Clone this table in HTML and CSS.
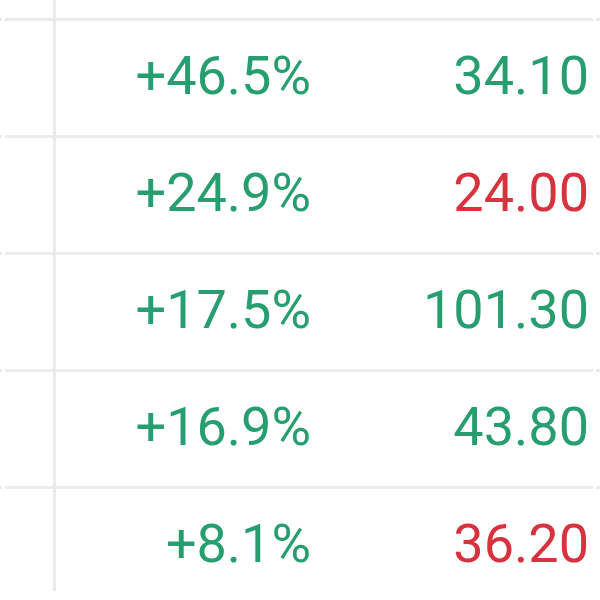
FILE: index.html
```html
<!DOCTYPE html>
<html>
<head>
<meta charset="utf-8">
<link rel="stylesheet" href="styles.css">
</head>
<body>
<div class="table">
  <div class="vline"></div>
  <div class="top"></div>
  <div class="rule"><i></i><i class="main"></i><i></i></div>
  <div class="row"><span class="pct up">+46.5%</span><span class="price up">34.10</span></div>
  <div class="rule"><i></i><i class="main"></i><i></i></div>
  <div class="row"><span class="pct up">+24.9%</span><span class="price down">24.00</span></div>
  <div class="rule"><i></i><i class="main"></i><i></i></div>
  <div class="row"><span class="pct up">+17.5%</span><span class="price up">101.30</span></div>
  <div class="rule"><i></i><i class="main"></i><i></i></div>
  <div class="row"><span class="pct up">+16.9%</span><span class="price up">43.80</span></div>
  <div class="rule"><i></i><i class="main"></i><i></i></div>
  <div class="row"><span class="pct up">+8.1%</span><span class="price down">36.20</span></div>
</div>
</body>
</html>
```
FILE: styles.css
```css
html, body {
  margin: 0;
  padding: 0;
  background: #ffffff;
}
body {
  width: 600px;
  height: 600px;
  overflow: hidden;
  font-family: Roboto, "Liberation Sans", sans-serif;
}
.table {
  position: relative;
  width: 600px;
  height: 600px;
}
.vline {
  position: absolute;
  left: 53px;
  top: 0;
  width: 3px;
  height: 591px;
  background: #ebebeb;
}
.top {
  height: 18px;
}
.rule {
  display: flex;
  gap: 3px;
  height: 3px;
}
.rule i {
  display: block;
  width: 2px;
  background: #ebebeb;
}
.rule i.main {
  flex: 1;
}
.rule i:last-child {
  width: 4px;
}
.row {
  display: flex;
  align-items: center;
  height: 114px;
  padding-left: 56px;
  padding-bottom: 5px;
  box-sizing: border-box;
  font-size: 54px;
  line-height: 1;
}
.pct {
  width: 255px;
  text-align: right;
}
.price {
  width: 278px;
  text-align: right;
}
.up { color: #279e6f; }
.down { color: #d9323f; }
```
